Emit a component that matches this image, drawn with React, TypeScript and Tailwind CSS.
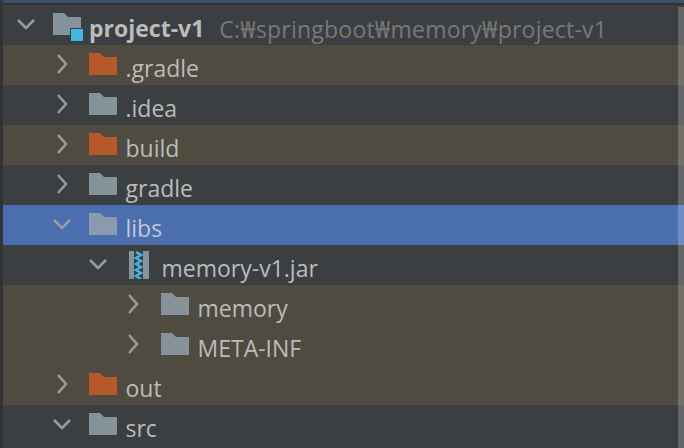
import React from "react";

type Kind = "plain" | "excluded" | "jar";

interface Row {
	name: string;
	depth: number;
	open?: boolean;
	kind: Kind;
	tint?: boolean;
	selected?: boolean;
}

const rows: Row[] = [
	{ name: ".gradle", depth: 1, kind: "excluded", tint: true },
	{ name: ".idea", depth: 1, kind: "plain" },
	{ name: "build", depth: 1, kind: "excluded", tint: true },
	{ name: "gradle", depth: 1, kind: "plain" },
	{ name: "libs", depth: 1, kind: "plain", open: true, selected: true },
	{ name: "memory-v1.jar", depth: 2, kind: "jar", open: true },
	{ name: "memory", depth: 3, kind: "plain", tint: true },
	{ name: "META-INF", depth: 3, kind: "plain", tint: true },
	{ name: "out", depth: 1, kind: "excluded", tint: true },
	{ name: "src", depth: 1, kind: "plain", open: true },
];

function Folder({ color }: { color: string }) {
	return (
		<svg width="28" height="22" viewBox="0 0 28 22" className="shrink-0 -translate-y-[1px]">
			<path d="M0 0H11L15 4H28V22H0Z" fill={color} />
		</svg>
	);
}

function ModuleFolder() {
	return (
		<svg width="32" height="28" viewBox="0 0 32 28" className="shrink-0 translate-y-[2px]">
			<path d="M0 0H11L15 4H28V22H0Z" fill="#87939a" />
			<rect x="17" y="15" width="15" height="13" fill="#3c3f41" />
			<rect x="18" y="16" width="12" height="12" fill="#40b6e0" />
		</svg>
	);
}

function Jar() {
	return (
		<svg width="20" height="28" viewBox="0 0 20 28" className="shrink-0">
			<rect width="20" height="28" fill="#87939a" />
			<rect x="5" width="9" height="28" fill="#3c3f41" />
			<path
				d="M7 1L12 4L7 7L12 10L7 13L12 16L7 19L12 22L7 25L12 28"
				fill="none"
				stroke="#40b6e0"
				strokeWidth="2.5"
			/>
		</svg>
	);
}

function Arrow({ open }: { open?: boolean }) {
	return (
		<svg width="20" height="20" viewBox="0 0 20 20" className="shrink-0 -translate-y-[1px]">
			<path
				d={open ? "M2 6L10 14L18 6" : "M6 1L14 10L6 19"}
				fill="none"
				stroke="#9a9da0"
				strokeWidth="2.5"
			/>
		</svg>
	);
}

function TreeRow({ row }: { row: Row }) {
	const bg = row.selected
		? "bg-[#4b6eaf]"
		: row.tint
			? "bg-[#4f4b41]"
			: "bg-[#3c3f41]";
	const indent =
		row.depth === 1 ? "pl-[49px]" : row.depth === 2 ? "pl-[85px]" : "pl-[120px]";
	const arrowSlot =
		row.depth === 1 ? "w-[37px]" : row.depth === 2 ? "w-[41px]" : "w-[38px]";
	const folder = row.kind === "excluded" ? "#b5592a" : row.selected ? "#8a9bb0" : "#87939a";

	return (
		<div className={`flex h-10 items-center ${bg} ${indent}`}>
			<div className={`flex items-center ${arrowSlot}`}>
				<Arrow open={row.open} />
			</div>
			{row.kind === "jar" ? (
				<div className="flex w-[33px]">
					<Jar />
				</div>
			) : (
				<div className="flex w-[37px]">
					<Folder color={folder} />
				</div>
			)}
			<span
				className={`-ml-[0.5px] pt-[7px] text-[23px] leading-none ${
					row.selected ? "text-[#c0c8d4]" : "text-[#bbbbbb]"
				}`}
			>
				{row.name}
			</span>
		</div>
	);
}

export default function App() {
	return (
		<div
			className="relative flex h-[448px] w-[684px] overflow-hidden bg-[#3c3f41]"
			style={{ fontFamily: '"Open Sans", "Noto Sans", sans-serif' }}
		>
			<div className="w-[3px] shrink-0 bg-[#313335]" />
			<div className="min-w-0 flex-1">
				<div className="h-[3px] bg-[#3d5166]" />
				<div className="h-[2px] bg-[#323232]" />
				<div className="flex h-10 items-center pl-[13px]">
					<div className="flex w-[37px] items-center">
						<Arrow open />
					</div>
					<div className="-mr-px flex w-[37px]">
						<ModuleFolder />
					</div>
					<span className="pt-[7px] text-[23px] font-bold leading-none text-[#bbbbbb]">
						project-v1
					</span>
					<span className="ml-[15px] pt-2 text-[23px] leading-none tracking-[0.22px] text-[#787878]">
						C:₩springboot₩memory₩project-v1
					</span>
				</div>
				{rows.map((row) => (
					<TreeRow key={row.name} row={row} />
				))}
			</div>
			{/* scrollbar overlay */}
			<div className="absolute top-[7px] right-0 bottom-0 w-[6px] bg-white/20" />
		</div>
	);
}
